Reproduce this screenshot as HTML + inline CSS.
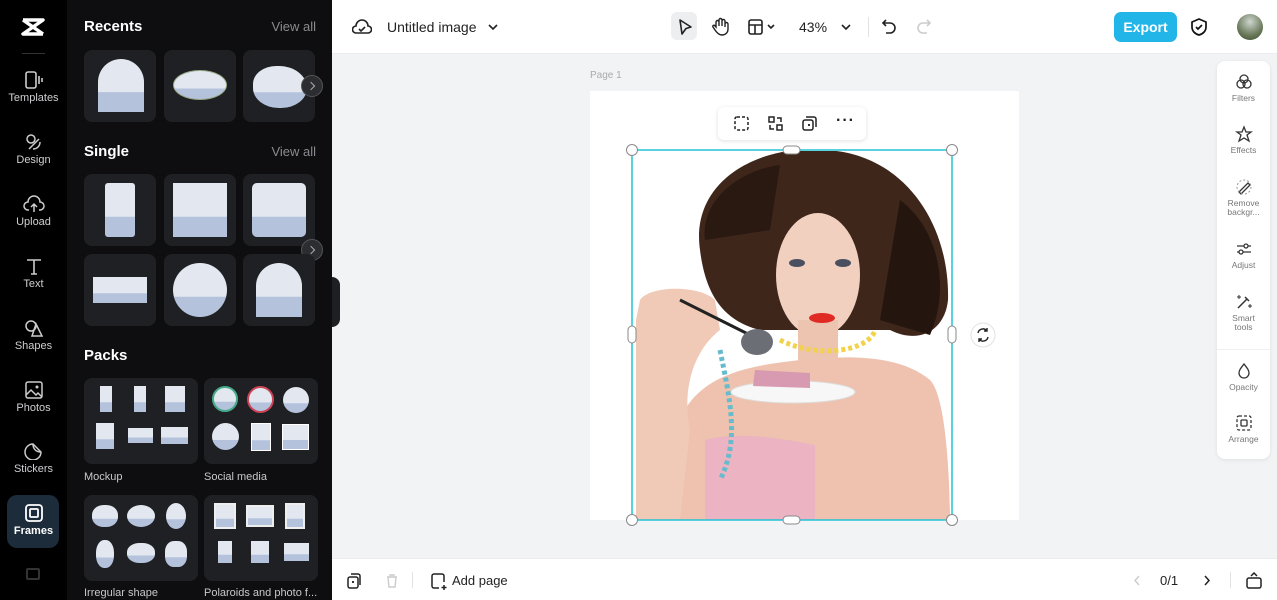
<!DOCTYPE html>
<html><head><meta charset="utf-8"><style>
*{box-sizing:border-box;margin:0;padding:0}
body{width:1277px;height:600px;overflow:hidden;font-family:"Liberation Sans",sans-serif;background:#f2f3f5;position:relative}
.rail{position:absolute;left:0;top:0;width:67px;height:600px;background:#000}
.panel{position:absolute;left:67px;top:0;width:265px;height:600px;background:#0e0e10;color:#fff}
.ri{position:absolute;left:0;width:67px;text-align:center;color:#cfcfd3;font-size:11px}
.ri svg{display:block;margin:0 auto 3px}
.h{position:absolute;font-weight:bold;font-size:15px;color:#fff}
.va{position:absolute;right:16px;font-size:13px;color:#8a8a90}
.card{position:absolute;width:72px;height:72px;background:#1f2024;border-radius:8px}
.pk{position:absolute;width:114px;height:86px;background:#1f2024;border-radius:8px}
.lbl{position:absolute;font-size:11px;color:#c8c8cc}
.sky{background:linear-gradient(#e3e8f0 62%,#b4c2dc 63%)}
.top{position:absolute;left:332px;top:0;width:945px;height:54px;background:#fff;border-bottom:1px solid #ececee}
.bot{position:absolute;left:332px;top:558px;width:945px;height:42px;background:#fff;border-top:1px solid #ececee}
.rp{position:absolute;left:1217px;top:61px;width:53px;height:398px;background:#fff;border-radius:8px;box-shadow:0 1px 4px rgba(0,0,0,.08)}
.rpi{position:absolute;left:0;width:53px;text-align:center;font-size:8.5px;color:#777;line-height:9px}
.rpi svg{display:block;margin:0 auto 3px}
.nx{position:absolute;width:22px;height:22px;border-radius:50%;background:#2c2d31;border:1px solid #555}
.nx:after{content:"";position:absolute;left:6px;top:7px;width:5px;height:5px;border-right:1.5px solid #aaa;border-top:1.5px solid #aaa;transform:rotate(45deg)}
</style></head><body>
<div class="rail">
 <svg style="position:absolute;left:20px;top:17px" width="26" height="20" viewBox="0 0 26 20"><path d="M3 3h20L3 17h20M3 3l20 14" stroke="#fff" stroke-width="3.5" fill="none" stroke-linejoin="round"/></svg>
 <div style="position:absolute;left:22px;top:53px;width:23px;height:1px;background:#333"></div>
 <div class="ri" style="top:71px"><svg width="20" height="18"><rect x="2" y="1" width="10" height="16" rx="2" stroke="#ccc" stroke-width="1.6" fill="none"/><path d="M15 5v8M18 7v4" stroke="#ccc" stroke-width="1.6"/></svg>Templates</div>
 <div class="ri" style="top:133px"><svg width="20" height="18"><circle cx="7" cy="6" r="4" stroke="#ccc" stroke-width="1.5" fill="none"/><path d="M5 16l10-10M9 16c4 0 7-3 7-7" stroke="#ccc" stroke-width="1.5" fill="none"/></svg>Design</div>
 <div class="ri" style="top:195px"><svg width="22" height="18"><path d="M6 15H5a4 4 0 0 1 0-8 6 6 0 0 1 12 0 4 4 0 0 1 0 8h-1M11 17V9M8 12l3-3 3 3" stroke="#ccc" stroke-width="1.5" fill="none"/></svg>Upload</div>
 <div class="ri" style="top:257px"><svg width="20" height="18"><path d="M3 3h14M10 3v14M7 17h6" stroke="#ccc" stroke-width="1.6" fill="none"/></svg>Text</div>
 <div class="ri" style="top:319px"><svg width="20" height="18"><circle cx="7" cy="7" r="5" stroke="#ccc" stroke-width="1.5" fill="none"/><path d="M12 5l6 12H8z" stroke="#ccc" stroke-width="1.5" fill="none"/></svg>Shapes</div>
 <div class="ri" style="top:381px"><svg width="20" height="18"><rect x="2" y="1" width="16" height="16" rx="2" stroke="#ccc" stroke-width="1.5" fill="none"/><path d="M2 14l5-5 5 5 2-2 4 4" stroke="#ccc" stroke-width="1.5" fill="none"/><circle cx="13" cy="6" r="1.5" fill="#ccc"/></svg>Photos</div>
 <div class="ri" style="top:442px"><svg width="20" height="18"><path d="M17 10A8 8 0 1 1 9 2l8 8z M9 2c0 5 3 8 8 8" stroke="#ccc" stroke-width="1.5" fill="none"/></svg>Stickers</div>
 <div style="position:absolute;left:7px;top:495px;width:52px;height:53px;border-radius:10px;background:#1c2c3a"></div>
 <div class="ri" style="top:504px;color:#fff;font-weight:bold"><svg width="20" height="18"><rect x="2" y="1" width="16" height="16" rx="3" stroke="#fff" stroke-width="1.8" fill="none"/><rect x="6" y="5" width="8" height="8" rx="1" stroke="#fff" stroke-width="1.8" fill="none"/></svg>Frames</div>
 <div style="position:absolute;left:26px;top:568px;width:14px;height:12px;border:2px solid #333;border-radius:2px"></div>
</div>
<div class="panel">
 <div class="h" style="left:17px;top:18px">Recents</div><div class="va" style="top:19px">View all</div>
 <div class="card" style="left:17px;top:50px"><div class="sky" style="position:absolute;left:14px;top:9px;width:46px;height:53px;border-radius:23px 23px 0 0"></div></div>
 <div class="card" style="left:97px;top:50px"><div class="sky" style="position:absolute;left:9px;top:20px;width:54px;height:30px;border-radius:50%;border:1px solid #9a8"></div></div>
 <div class="card" style="left:176px;top:50px"><div class="sky" style="position:absolute;left:10px;top:16px;width:54px;height:42px;border-radius:45% 55% 50% 50%"></div></div>
 <div class="nx" style="left:234px;top:75px"></div>
 <div class="h" style="left:17px;top:143px">Single</div><div class="va" style="top:144px">View all</div>
 <div class="card" style="left:17px;top:174px"><div class="sky" style="position:absolute;left:21px;top:9px;width:30px;height:54px;border-radius:3px"></div></div>
 <div class="card" style="left:97px;top:174px"><div class="sky" style="position:absolute;left:9px;top:9px;width:54px;height:54px"></div></div>
 <div class="card" style="left:176px;top:174px"><div class="sky" style="position:absolute;left:9px;top:9px;width:54px;height:54px;border-radius:5px"></div></div>
 <div class="nx" style="left:234px;top:239px"></div>
 <div class="card" style="left:17px;top:254px"><div class="sky" style="position:absolute;left:9px;top:23px;width:54px;height:26px"></div></div>
 <div class="card" style="left:97px;top:254px"><div class="sky" style="position:absolute;left:9px;top:9px;width:54px;height:54px;border-radius:50%"></div></div>
 <div class="card" style="left:176px;top:254px"><div class="sky" style="position:absolute;left:13px;top:9px;width:46px;height:54px;border-radius:23px 23px 0 0"></div></div>
 <div class="h" style="left:17px;top:347px">Packs</div>
 <div class="pk" style="left:17px;top:378px"><div class="sky" style="position:absolute;left:16px;top:8px;width:12px;height:26px"></div><div class="sky" style="position:absolute;left:50px;top:8px;width:12px;height:26px"></div><div class="sky" style="position:absolute;left:81px;top:8px;width:20px;height:26px"></div><div class="sky" style="position:absolute;left:12px;top:45px;width:18px;height:26px"></div><div class="sky" style="position:absolute;left:44px;top:50px;width:25px;height:15px"></div><div class="sky" style="position:absolute;left:77px;top:49px;width:27px;height:17px"></div></div>
 <div class="pk" style="left:137px;top:378px"><div class="sky" style="position:absolute;left:8px;top:8px;width:26px;height:26px;border-radius:50%;border:2px solid #4a8"></div><div class="sky" style="position:absolute;left:43px;top:8px;width:27px;height:27px;border-radius:50%;border:2px solid #c45"></div><div class="sky" style="position:absolute;left:79px;top:9px;width:26px;height:26px;border-radius:50%"></div><div class="sky" style="position:absolute;left:8px;top:45px;width:27px;height:27px;border-radius:50%"></div><div class="sky" style="position:absolute;left:47px;top:45px;width:20px;height:28px;border:1px solid #fff"></div><div class="sky" style="position:absolute;left:78px;top:46px;width:27px;height:26px;border:1px solid #fff"></div></div>
 <div class="lbl" style="left:17px;top:471px">Mockup</div><div class="lbl" style="left:137px;top:471px">Social media</div>
 <div class="pk" style="left:17px;top:495px"><div class="sky" style="position:absolute;left:8px;top:10px;width:26px;height:22px;border-radius:45%"></div><div class="sky" style="position:absolute;left:43px;top:10px;width:28px;height:22px;border-radius:50%"></div><div class="sky" style="position:absolute;left:82px;top:8px;width:20px;height:26px;border-radius:50%"></div><div class="sky" style="position:absolute;left:12px;top:45px;width:18px;height:28px;border-radius:45%"></div><div class="sky" style="position:absolute;left:43px;top:48px;width:28px;height:20px;border-radius:45%"></div><div class="sky" style="position:absolute;left:81px;top:46px;width:22px;height:26px;border-radius:40%"></div></div>
 <div class="pk" style="left:137px;top:495px"><div class="sky" style="position:absolute;left:10px;top:8px;width:22px;height:26px;border:2px solid #eee"></div><div class="sky" style="position:absolute;left:42px;top:10px;width:28px;height:22px;border:2px solid #eee"></div><div class="sky" style="position:absolute;left:81px;top:8px;width:20px;height:26px;border:2px solid #eee"></div><div class="sky" style="position:absolute;left:14px;top:46px;width:14px;height:22px"></div><div class="sky" style="position:absolute;left:47px;top:46px;width:18px;height:22px"></div><div class="sky" style="position:absolute;left:80px;top:48px;width:25px;height:18px"></div></div>
 <div class="lbl" style="left:17px;top:587px">Irregular shape</div><div class="lbl" style="left:137px;top:587px">Polaroids and photo f...</div>
 <div style="position:absolute;left:265px;top:277px;width:8px;height:50px;background:#1e1f23;border-radius:0 8px 8px 0"></div>
</div>

<div class="top">
 <svg style="position:absolute;left:20px;top:18px" width="20" height="18"><path d="M5 15H4a3.5 3.5 0 0 1 0-7 6 6 0 0 1 12 0 3.5 3.5 0 0 1 0 7H5z" stroke="#222" stroke-width="1.6" fill="none"/><path d="M7 11l2 2 4-4" stroke="#222" stroke-width="1.6" fill="none"/></svg>
 <div style="position:absolute;left:55px;top:19px;font-size:14px;color:#222">Untitled image</div>
 <svg style="position:absolute;left:155px;top:22px" width="12" height="10"><path d="M2 3l4 4 4-4" stroke="#222" stroke-width="1.6" fill="none"/></svg>
 <div style="position:absolute;left:339px;top:12px;width:26px;height:28px;background:#eceef0;border-radius:6px"></div>
 <svg style="position:absolute;left:345px;top:18px" width="16" height="18"><path d="M3 2l11 7-5 1.5L5 16z" stroke="#222" stroke-width="1.6" fill="none" stroke-linejoin="round"/></svg>
 <svg style="position:absolute;left:379px;top:17px" width="18" height="20"><path d="M5 10V5a1.5 1.5 0 0 1 3 0v4V3a1.5 1.5 0 0 1 3 0v6V4a1.5 1.5 0 0 1 3 0v6-3a1.5 1.5 0 0 1 3 0v5c0 4-3 6-6 6s-5-2-7-5l-2-3c-1-1 1-3 2-1z" stroke="#222" stroke-width="1.4" fill="none"/></svg>
 <svg style="position:absolute;left:416px;top:19px" width="30" height="16"><rect x="1" y="1" width="13" height="14" rx="2" stroke="#222" stroke-width="1.6" fill="none"/><path d="M1 6h13M7 6v9M20 6l3 3 3-3" stroke="#222" stroke-width="1.6" fill="none"/></svg>
 <div style="position:absolute;left:467px;top:19px;font-size:14px;color:#222">43%</div>
 <svg style="position:absolute;left:508px;top:22px" width="12" height="10"><path d="M2 3l4 4 4-4" stroke="#222" stroke-width="1.6" fill="none"/></svg>
 <div style="position:absolute;left:536px;top:17px;width:1px;height:20px;background:#e2e2e4"></div>
 <svg style="position:absolute;left:549px;top:18px" width="16" height="18"><path d="M5 2L2 5l3 3M2 5h7a5 5 0 0 1 0 10H5" stroke="#222" stroke-width="1.6" fill="none"/></svg>
 <svg style="position:absolute;left:584px;top:18px" width="16" height="18"><path d="M11 2l3 3-3 3M14 5H7a5 5 0 0 0 0 10h4" stroke="#ccc" stroke-width="1.6" fill="none"/></svg>
 <div style="position:absolute;left:782px;top:12px;width:63px;height:30px;background:#22b5e8;border-radius:7px;color:#fff;font-weight:bold;font-size:14px;text-align:center;line-height:30px">Export</div>
 <svg style="position:absolute;left:858px;top:17px" width="18" height="20"><path d="M9 2l7 3v5c0 4-3 7-7 8-4-1-7-4-7-8V5z" stroke="#111" stroke-width="1.7" fill="none"/><path d="M6 10l2 2 4-4" stroke="#111" stroke-width="1.7" fill="none"/></svg>
 <div style="position:absolute;left:905px;top:14px;width:26px;height:26px;border-radius:50%;background:radial-gradient(circle at 50% 30%,#cfd6d0,#6a7a5a 60%,#3e4a30)"></div>
</div>

<div style="position:absolute;left:590px;top:70px;font-size:10px;color:#aaa">Page 1</div>
<div style="position:absolute;left:590px;top:91px;width:429px;height:429px;background:#fff"></div>

<svg style="position:absolute;left:0;top:0" width="1277" height="600">
 <defs><clipPath id="c"><rect x="633" y="151" width="318" height="369"/></clipPath></defs>
 <g clip-path="url(#c)">
  <path d="M700 250 C 690 180 760 145 820 150 C 900 150 950 220 948 300 C 945 330 920 345 890 330 L 760 330 C 720 320 705 290 700 250z" fill="#3e261b"/>
  <path d="M705 240 C 700 200 740 170 780 165 L 770 230 z" fill="#2a1911"/>
  <path d="M900 200 C 940 230 950 290 930 335 L 880 320z" fill="#24160f"/>
  <path d="M680 420 C 700 370 760 365 800 360 C 850 355 900 355 930 380 C 950 400 950 520 950 520 L 680 520z" fill="#eec2ae"/>
  <ellipse cx="818" cy="275" rx="42" ry="62" fill="#f2d0c0"/>
  <rect x="798" y="320" width="40" height="40" fill="#ecc4b0"/>
  <path d="M640 300 C 650 285 700 285 715 300 L 720 330 C 700 345 680 380 690 430 L 680 520 L 636 520 L 636 320z" fill="#f0cab6"/>
  <path d="M705 440 C 740 430 790 440 815 445 L 815 520 L 705 520z" fill="#ecb3c2"/>
  <path d="M680 300 L 760 340" stroke="#222" stroke-width="3"/>
  <ellipse cx="757" cy="342" rx="16" ry="13" fill="#6b6e75"/>
  <path d="M720 350 C 730 400 740 440 720 480" stroke="#6bc" stroke-width="5" fill="none" stroke-dasharray="4 3"/>
  <path d="M780 340 C 820 360 870 350 875 330" stroke="#f2d24a" stroke-width="5" fill="none" stroke-dasharray="4 3"/>
  <ellipse cx="793" cy="392" rx="62" ry="11" fill="#f7f7f7" stroke="#ddd"/>
  <path d="M755 370 l55 3 l0 15 l-57 -2z" fill="#d89ab0"/>
  <ellipse cx="822" cy="318" rx="13" ry="5" fill="#e02a24"/>
  <ellipse cx="797" cy="263" rx="8" ry="4" fill="#4a5060"/><ellipse cx="843" cy="263" rx="8" ry="4" fill="#4a5060"/>
 </g>
 <rect x="632" y="150" width="320" height="370" fill="none" stroke="#22c3d6" stroke-width="1.5"/>
 <g fill="#fff" stroke="#888" stroke-width="1">
  <circle cx="632" cy="150" r="5.5"/><circle cx="952" cy="150" r="5.5"/><circle cx="632" cy="520" r="5.5"/><circle cx="952" cy="520" r="5.5"/>
  <rect x="783" y="146" width="17" height="8" rx="4"/><rect x="783" y="516" width="17" height="8" rx="4"/>
  <rect x="628" y="326" width="8" height="17" rx="4"/><rect x="948" y="326" width="8" height="17" rx="4"/>
 </g>
 <circle cx="983" cy="335" r="12" fill="#fff" stroke="#e2e2e2"/>
 <path d="M978 333a5 5 0 0 1 9-2M988 337a5 5 0 0 1-9 2M987 328v3h-3M979 342v-3h3" stroke="#222" stroke-width="1.4" fill="none"/>
</svg>

<div style="position:absolute;left:718px;top:107px;width:148px;height:33px;background:#fff;border-radius:6px;box-shadow:0 1px 5px rgba(0,0,0,.12)">
 <svg style="position:absolute;left:16px;top:9px" width="15" height="15"><rect x="1" y="1" width="13" height="13" rx="2" stroke="#222" stroke-width="1.5" fill="none" stroke-dasharray="3 2"/></svg>
 <svg style="position:absolute;left:50px;top:9px" width="15" height="15"><rect x="1" y="1" width="5" height="5" stroke="#222" stroke-width="1.5" fill="none"/><rect x="9" y="9" width="5" height="5" stroke="#222" stroke-width="1.5" fill="none"/><path d="M9 2h4v4M6 13H2V9" stroke="#222" stroke-width="1.5" fill="none"/></svg>
 <svg style="position:absolute;left:84px;top:9px" width="15" height="15"><rect x="1" y="4" width="10" height="10" rx="2" stroke="#222" stroke-width="1.5" fill="none"/><path d="M4 1h8a2 2 0 0 1 2 2v8M6 9h2M7 8v2" stroke="#222" stroke-width="1.5" fill="none"/></svg>
 <div style="position:absolute;left:118px;top:5px;font-size:16px;font-weight:bold;color:#222;letter-spacing:1px">···</div>
</div>

<div class="rp">
 <div class="rpi" style="top:12px"><svg width="18" height="18"><circle cx="9" cy="6" r="4" stroke="#333" stroke-width="1.3" fill="none"/><circle cx="6" cy="11" r="4" stroke="#333" stroke-width="1.3" fill="none"/><circle cx="12" cy="11" r="4" stroke="#333" stroke-width="1.3" fill="none"/></svg>Filters</div>
 <div class="rpi" style="top:64px"><svg width="18" height="18"><path d="M9 2l2 5h5l-4 3 2 6-5-3-5 3 2-6-4-3h5z" stroke="#333" stroke-width="1.3" fill="none"/></svg>Effects</div>
 <div class="rpi" style="top:117px"><svg width="18" height="18"><path d="M4 14l9-9 2 2-9 9z" stroke="#333" stroke-width="1.3" fill="none"/><circle cx="9" cy="9" r="7" stroke="#999" stroke-width="1" fill="none" stroke-dasharray="2 2"/></svg>Remove<br>backgr...</div>
 <div class="rpi" style="top:179px"><svg width="18" height="18"><path d="M2 6h14M2 12h14" stroke="#333" stroke-width="1.3"/><circle cx="11" cy="6" r="2" fill="#fff" stroke="#333" stroke-width="1.3"/><circle cx="6" cy="12" r="2" fill="#fff" stroke="#333" stroke-width="1.3"/></svg>Adjust</div>
 <div class="rpi" style="top:232px"><svg width="18" height="18"><path d="M3 15l9-9M10 4l4 4" stroke="#333" stroke-width="1.5"/><path d="M4 2v4M2 4h4M15 11v4M13 13h4" stroke="#333" stroke-width="1"/></svg>Smart<br>tools</div>
 <div style="position:absolute;left:0;top:288px;width:53px;height:1px;background:#f0f0f0"></div>
 <div class="rpi" style="top:301px"><svg width="18" height="18"><path d="M9 2C6 6 4 8 4 11a5 5 0 0 0 10 0c0-3-2-5-5-9z" stroke="#333" stroke-width="1.3" fill="none"/></svg>Opacity</div>
 <div class="rpi" style="top:353px"><svg width="18" height="18"><rect x="2" y="2" width="14" height="14" rx="2" stroke="#333" stroke-width="1.3" fill="none" stroke-dasharray="3 2"/><rect x="6" y="6" width="6" height="6" rx="1" stroke="#333" stroke-width="1.3" fill="none"/></svg>Arrange</div>
</div>

<div class="bot">
 <svg style="position:absolute;left:15px;top:14px" width="14" height="16"><rect x="1" y="4" width="10" height="11" rx="2" stroke="#222" stroke-width="1.5" fill="none"/><path d="M4 1h7a2 2 0 0 1 2 2v9M5 9h2M6 8v2" stroke="#222" stroke-width="1.5" fill="none"/></svg>
 <svg style="position:absolute;left:53px;top:14px" width="14" height="16"><path d="M2 4h10M5 4V2h4v2M3 4l1 10h6l1-10" stroke="#ccc" stroke-width="1.4" fill="none"/></svg>
 <div style="position:absolute;left:80px;top:13px;width:1px;height:16px;background:#e2e2e4"></div>
 <svg style="position:absolute;left:99px;top:14px" width="16" height="17"><path d="M8 15H3a2 2 0 0 1-2-2V3a2 2 0 0 1 2-2h8a2 2 0 0 1 2 2v6M13 12v5M10.5 14.5h5" stroke="#222" stroke-width="1.5" fill="none"/></svg>
 <div style="position:absolute;left:120px;top:14px;font-size:13px;color:#222">Add page</div>
 <svg style="position:absolute;left:800px;top:15px" width="10" height="13"><path d="M7 2L3 6.5 7 11" stroke="#ccc" stroke-width="1.4" fill="none"/></svg>
 <div style="position:absolute;left:828px;top:14px;font-size:13px;color:#222">0/1</div>
 <svg style="position:absolute;left:870px;top:15px" width="10" height="13"><path d="M3 2l4 4.5L3 11" stroke="#222" stroke-width="1.5" fill="none"/></svg>
 <div style="position:absolute;left:898px;top:13px;width:1px;height:16px;background:#e2e2e4"></div>
 <svg style="position:absolute;left:914px;top:13px" width="16" height="17"><rect x="1" y="6" width="14" height="10" rx="2" stroke="#222" stroke-width="1.5" fill="none"/><path d="M5 4l3-3 3 3" stroke="#222" stroke-width="1.5" fill="none"/></svg>
</div>
</body></html>
